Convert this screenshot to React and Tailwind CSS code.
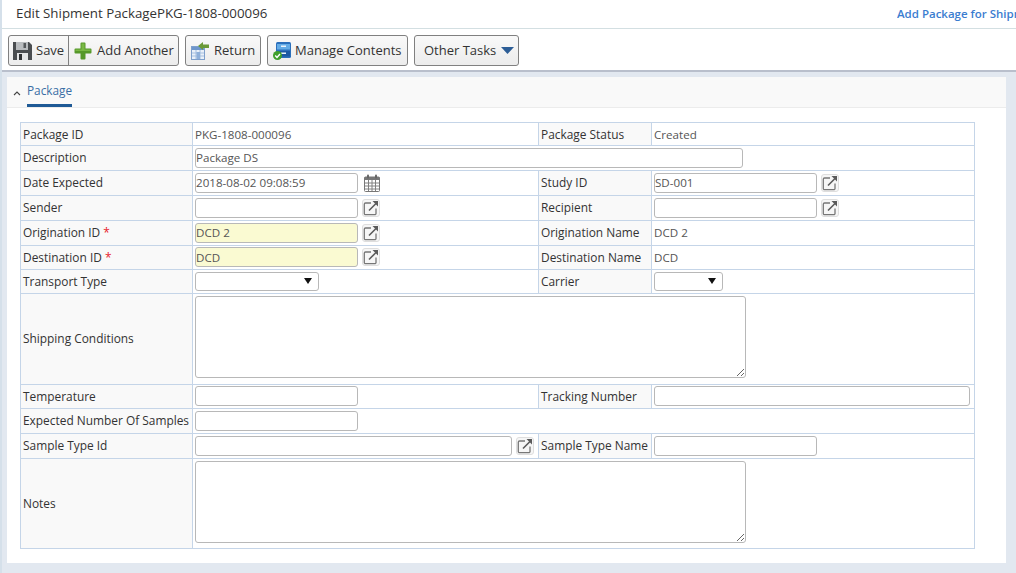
import { useState } from 'react';

const labelCell = 'bg-[#f9f9f9] border border-[#c5d5e8] pl-[2px] pr-1 text-[11.9px] font-medium text-[#333] whitespace-nowrap';
const valueCell = 'border border-[#c5d5e8] pl-[2px] pr-1 text-[11.6px] text-[#555]';
const areaCell = 'border border-[#c5d5e8] pl-[2px] pr-1 pt-[2px] align-top';
const inputBase = 'block h-[20px] border border-[#b8b8b8] rounded-[3px] px-0 text-[11.6px] text-[#555] outline-none';
const toolButton = 'flex h-[31px] items-center whitespace-nowrap rounded-[3px] border border-[#808080] bg-gradient-to-b from-[#f9f9f9] to-[#ececec]';

function SaveIcon() {
    return (
        <svg width="19" height="18" viewBox="0 0 19 18" className="shrink-0">
            <path d="M0 0h16l3 3v15H0z" fill="#4a4d50" />
            <rect x="3" y="0" width="12" height="8" fill="#b9bcbf" />
            <rect x="10.500" y="1" width="2.500" height="5" fill="#55585b" />
            <rect x="4" y="11" width="11" height="7" fill="#e4e5e6" />
            <rect x="6" y="12" width="3" height="6" fill="#2f3133" />
        </svg>
    );
}

function PlusIcon() {
    return (
        <svg width="18" height="18" viewBox="0 0 18 18" className="shrink-0">
            <path d="M6.500 1.500q0-1 1-1h3q1 0 1 1v5h5q1 0 1 1v3q0 1-1 1h-5v5q0 1-1 1h-3q-1 0-1-1v-5h-5q-1 0-1-1v-3q0-1 1-1h5z" fill="#56982a" />
            <path d="M7.500 1.500h3v6h6v1.500H1.500V7.500h6z" fill="#79b844" />
        </svg>
    );
}

function ReturnIcon() {
    return (
        <svg width="18" height="18" viewBox="0 0 18 18" className="shrink-0">
            <rect x="0.500" y="4.500" width="13" height="13" fill="#e9f0f9" stroke="#7fa0cc" />
            <rect x="1" y="5" width="12" height="3" fill="#6d96cc" />
            <path d="M5 8v9M9 8v9M1 11h12M1 14h12" stroke="#a4bfe0" strokeWidth="1" />
            <rect x="5.500" y="10" width="3.500" height="7" fill="#8fb0da" />
            <path d="M7 4l5-4v2.500h6v3.500h-6v2z" fill="#6b9a38" />
        </svg>
    );
}

function ContentsIcon() {
    return (
        <svg width="18" height="18" viewBox="0 0 18 18" className="shrink-0">
            <rect x="3" y="0" width="15" height="16" rx="1.500" fill="#2b6fbb" />
            <rect x="4" y="2" width="13" height="5.500" fill="#63abe6" />
            <rect x="4" y="9" width="13" height="5.500" fill="#1d5aa3" />
            <rect x="8" y="3.500" width="5" height="1.500" fill="#eaf3fb" />
            <rect x="8" y="10.500" width="5" height="1.500" fill="#eaf3fb" />
            <circle cx="4.500" cy="13.500" r="4.500" fill="#3f9f2c" />
            <path d="M2.200 13.500l1.800 1.900 3-3.400" fill="none" stroke="#fff" strokeWidth="1.400" />
        </svg>
    );
}

function LookupButton() {
    return (
        <button type="button" className="ml-[4px] flex h-[18px] w-[18px] shrink-0 items-center justify-center rounded-[3px] border border-[#dedede] bg-[#f6f6f6]">
            <svg width="16" height="16" viewBox="0 0 16 16" fill="none">
                <path d="M8 3H2.500A1.200 1.200 0 0 0 1.300 4.200v9.300a1.200 1.200 0 0 0 1.200 1.200h9.300a1.200 1.200 0 0 0 1.200-1.200V8.500" stroke="#777" strokeWidth="1.300" />
                <path d="M6 10.500L13 3.500" stroke="#5a5a5a" strokeWidth="1.600" />
                <path d="M9.500 1H15v5.500z" fill="#5a5a5a" />
            </svg>
        </button>
    );
}

function CalendarIcon() {
    return (
        <svg width="16" height="18" viewBox="0 0 16 18" className="ml-[6px] shrink-0" fill="none">
            <rect x="0.500" y="3" width="15" height="14.500" rx="1" fill="#fff" stroke="#777" />
            <rect x="0.500" y="3" width="15" height="3" fill="#777" />
            <path d="M1 9h14M1 12h14M1 15h14M4.500 6v11M8 6v11M11.500 6v11" stroke="#808080" strokeWidth="1" />
            <rect x="3" y="0.500" width="2" height="4" rx="1" fill="#666" />
            <rect x="11" y="0.500" width="2" height="4" rx="1" fill="#666" />
        </svg>
    );
}

function SelectBox({ width }) {
    return (
        <div className="mb-[1px] flex h-[19px] items-center justify-end rounded-[3px] border border-[#b8b8b8] bg-white pr-[6px]" style={{ width }}>
            <svg width="8" height="6" viewBox="0 0 8 6">
                <path d="M0 0h8L4 6z" fill="#111" />
            </svg>
        </div>
    );
}

function Field({ width, value = '', required, lookup, calendar }) {
    const [text, setText] = useState(value);
    return (
        <div className="flex items-center pb-[1px]">
            <input
                value={text}
                onChange={(e) => setText(e.target.value)}
                className={`${inputBase} ${required ? 'bg-[#fafad2]' : 'bg-white'}`}
                style={{ width }}
            />
            {calendar && <CalendarIcon />}
            {lookup && <LookupButton />}
        </div>
    );
}

const Star = () => <span className="text-[#e8222a]">*</span>;

export default function App() {
    const [tab] = useState('Package');

    return (
        <div className="h-[573px] w-[1016px] overflow-hidden border-l-2 border-[#d5e0ea] bg-[#e2e8f0] font-['Open_Sans',sans-serif]">
            <div className="flex h-[29px] items-center justify-between border-b border-[#d3dfe2] bg-white pb-[1px]">
                <h1 className="pl-[14px] text-[13.3px] text-[#333]">Edit Shipment PackagePKG-1808-000096</h1>
                <a className="w-[119px] overflow-hidden whitespace-nowrap text-[11.5px] font-semibold text-[#3b7dd0]">Add Package for Shipment</a>
            </div>

            <div className="flex h-[43px] items-start gap-[6px] border-b-2 border-[#b9bfcc] bg-white pl-[6px] pt-[6px] text-[13px] text-[#333]">
                <div className={toolButton}>
                    <button type="button" className="flex h-full w-[60px] items-center gap-[4px] border-r border-[#808080] pl-[4px]">
                        <SaveIcon />
                        Save
                    </button>
                    <button type="button" className="flex h-full w-[109px] items-center gap-[5px] pl-[5px]">
                        <PlusIcon />
                        Add Another
                    </button>
                </div>
                <button type="button" className={`${toolButton} w-[76px] gap-[5px] pl-[5px]`}>
                    <ReturnIcon />
                    Return
                </button>
                <button type="button" className={`${toolButton} w-[141px] gap-[4px] pl-[5px]`}>
                    <ContentsIcon />
                    Manage Contents
                </button>
                <button type="button" className={`${toolButton} w-[105px] gap-[5px] pl-[9px]`}>
                    Other Tasks
                    <svg width="13" height="7" viewBox="0 0 13 7">
                        <path d="M0 0h13L6.500 7z" fill="#2c5d96" />
                    </svg>
                </button>
            </div>

            <div className="ml-[5px] mt-[5px] h-[486px] w-[999px] bg-white">
                <div className="flex h-[31px] items-end border-b border-[#ececec] bg-[#f9f9f9] pl-[6px]">
                    <svg width="8" height="5" viewBox="0 0 8 5" fill="none" className="mb-[11px]">
                        <path d="M1 4l3-3 3 3" stroke="#444" strokeWidth="1.100" />
                    </svg>
                    <div className="ml-[6px] h-[28px] border-b-[3px] border-[#1f5a96] text-[11.8px] font-medium leading-[22px] text-[#3a6ea5]">{tab}</div>
                </div>

                <div className="pl-[13px] pt-[14px]">
                    <table className="w-[954px] table-fixed border-collapse">
                        <colgroup>
                            <col className="w-[172px]" />
                            <col className="w-[346px]" />
                            <col className="w-[113px]" />
                            <col className="w-[323px]" />
                        </colgroup>
                        <tbody>
                            <tr className="h-[23px]">
                                <td className={`${labelCell} pt-[1px]`}>Package ID</td>
                                <td className={`${valueCell} pt-[1px]`}>PKG-1808-000096</td>
                                <td className={`${labelCell} pt-[1px]`}>Package Status</td>
                                <td className={`${valueCell} pt-[1px]`}>Created</td>
                            </tr>
                            <tr className="h-[25px]">
                                <td className={labelCell}>Description</td>
                                <td className={valueCell} colSpan={3}><Field width={548} value="Package DS" /></td>
                            </tr>
                            <tr className="h-[25px]">
                                <td className={labelCell}>Date Expected</td>
                                <td className={valueCell}><Field width={163} value="2018-08-02 09:08:59" calendar /></td>
                                <td className={labelCell}>Study ID</td>
                                <td className={valueCell}><Field width={163} value="SD-001" lookup /></td>
                            </tr>
                            <tr className="h-[25px]">
                                <td className={labelCell}>Sender</td>
                                <td className={valueCell}><Field width={163} lookup /></td>
                                <td className={labelCell}>Recipient</td>
                                <td className={valueCell}><Field width={163} lookup /></td>
                            </tr>
                            <tr className="h-[25px]">
                                <td className={labelCell}>Origination ID <Star /></td>
                                <td className={valueCell}><Field width={163} value="DCD 2" required lookup /></td>
                                <td className={labelCell}>Origination Name</td>
                                <td className={valueCell}>DCD 2</td>
                            </tr>
                            <tr className="h-[24px]">
                                <td className={labelCell}>Destination ID <Star /></td>
                                <td className={valueCell}><Field width={163} value="DCD" required lookup /></td>
                                <td className={labelCell}>Destination Name</td>
                                <td className={valueCell}>DCD</td>
                            </tr>
                            <tr className="h-[24px]">
                                <td className={labelCell}>Transport Type</td>
                                <td className={valueCell}><SelectBox width={124} /></td>
                                <td className={labelCell}>Carrier</td>
                                <td className={valueCell}><SelectBox width={69} /></td>
                            </tr>
                            <tr className="h-[91px]">
                                <td className={labelCell}>Shipping Conditions</td>
                                <td className={areaCell} colSpan={3}>
                                    <textarea className="block h-[82px] w-[551px] rounded-[3px] border border-[#b8b8b8] bg-white outline-none" />
                                </td>
                            </tr>
                            <tr className="h-[24px]">
                                <td className={labelCell}>Temperature</td>
                                <td className={valueCell}><Field width={163} /></td>
                                <td className={labelCell}>Tracking Number</td>
                                <td className={valueCell}><Field width={317} /></td>
                            </tr>
                            <tr className="h-[25px]">
                                <td className={labelCell}>Expected Number Of Samples</td>
                                <td className={valueCell} colSpan={3}><Field width={163} /></td>
                            </tr>
                            <tr className="h-[25px]">
                                <td className={labelCell}>Sample Type Id</td>
                                <td className={valueCell}><Field width={317} lookup /></td>
                                <td className={labelCell}>Sample Type Name</td>
                                <td className={valueCell}><Field width={163} /></td>
                            </tr>
                            <tr className="h-[90px]">
                                <td className={labelCell}>Notes</td>
                                <td className={areaCell} colSpan={3}>
                                    <textarea className="block h-[82px] w-[551px] rounded-[3px] border border-[#b8b8b8] bg-white outline-none" />
                                </td>
                            </tr>
                        </tbody>
                    </table>
                </div>
            </div>
        </div>
    );
}
